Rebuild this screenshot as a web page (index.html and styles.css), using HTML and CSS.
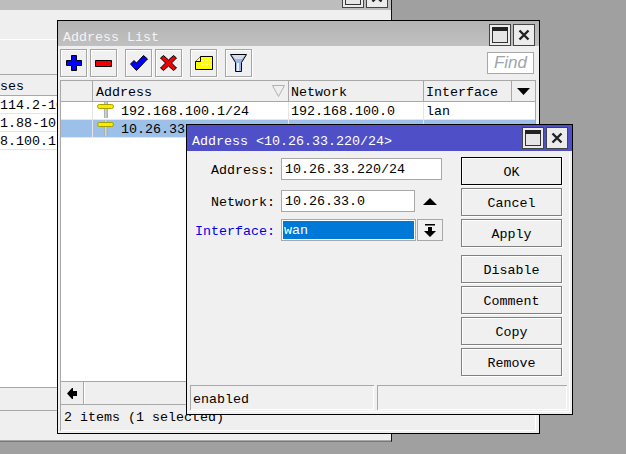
FILE: index.html
```html
<!DOCTYPE html>
<html lang="en">
<head>
<meta charset="utf-8">
<title>Address List</title>
<link rel="stylesheet" href="styles.css">
</head>
<body>
<div class="desktop">

  <section class="win back">
    <div class="back-title">
      <span class="tbtn back-btn"><svg width="20" height="20"><use href="#i-max"/></svg></span>
      <span class="tbtn back-btn"><svg width="20" height="20"><use href="#i-close"/></svg></span>
    </div>
    <div class="back-tools"></div>
    <div class="back-gap"></div>
    <div class="back-head"><span class="back-cell">ses</span></div>
    <div class="back-rows">
      <div class="back-row">114.2-10</div>
      <div class="back-row">1.88-10.</div>
      <div class="back-row">8.100.1-</div>
    </div>
    <div class="back-scroll"></div>
    <div class="back-status"></div>
  </section>

  <section class="win list">
    <header class="title list-title">
      <span class="title-text">Address List</span>
      <span class="tbtn"><svg width="20" height="20"><use href="#i-max"/></svg></span>
      <span class="tbtn"><svg width="20" height="20"><use href="#i-close"/></svg></span>
    </header>
    <div class="toolbar">
      <span class="tool"><svg width="16" height="16" viewBox="0 0 16 16"><path d="M5.500.5h5v5h5v5h-5v5h-5v-5h-5v-5h5z" fill="#0000ff" stroke="#000"/></svg></span>
      <span class="tool"><svg width="17" height="7" viewBox="0 0 17 7"><path d="M.5.500h16v6H.5z" fill="#f00000" stroke="#000"/></svg></span>
      <span class="tool group"><svg width="18" height="16" viewBox="0 0 18 16"><path d="M.5 9l3.500-3.500 2.500 2.500L13.500.5l4 3.500L6.500 15.500z" fill="#0000ff" stroke="#000"/></svg></span>
      <span class="tool"><svg width="17" height="16" viewBox="0 0 17 16"><path d="M.5 3l3-2.500 5 4.500 5-4.500 3 2.500-5 5 5 5-3 2.500-5-4.500-5 4.500-3-2.500 5-5z" fill="#f00000" stroke="#000"/></svg></span>
      <span class="tool group"><svg width="18" height="14" viewBox="0 0 18 14"><path d="M5.500.5h12v13H.5V5.500z" fill="#ffff00" stroke="#000"/><path d="M.5 5.500h5v-5" fill="#fff59a" stroke="#000"/><path d="M6 4.500h10M6 8.500h10" stroke="#fff8a0" stroke-dasharray="3 1"/></svg></span>
      <span class="tool group"><svg width="17" height="18" viewBox="0 0 17 18"><path d="M.5.500h16l-5 8v9h-6v-9z" fill="#9db4e6" stroke="#000"/><path d="M2 1h13l-3 4H5z" fill="#d8dcec"/><path d="M7 9h2v8H7z" fill="#e8eefa"/></svg></span>
      <span class="find">Find</span>
    </div>
    <div class="table">
      <div class="thead">
        <span class="th col-mark"></span>
        <span class="th col-addr">Address<svg class="sort" width="13" height="13" viewBox="0 0 13 13"><path d="M.5 1.500h12l-6 11z" fill="none" stroke="#b0b0b0"/></svg></span>
        <span class="th col-net">Network</span>
        <span class="th col-if">Interface</span>
        <span class="th col-menu"><svg width="13" height="7" viewBox="0 0 13 7"><path d="M0 0h13L6.500 7z"/></svg></span>
      </div>
      <div class="tr">
        <span class="td col-mark"></span>
        <span class="td col-addr"><svg class="pin" width="17" height="17"><use href="#i-addr"/></svg><span class="cell-text">192.168.100.1/24</span></span>
        <span class="td col-net"><span class="cell-text">192.168.100.0</span></span>
        <span class="td col-rest"><span class="cell-text">lan</span></span>
      </div>
      <div class="tr selected">
        <span class="td col-mark"></span>
        <span class="td col-addr"><svg class="pin" width="17" height="17"><use href="#i-addr"/></svg><span class="cell-text">10.26.33.220/24</span></span>
        <span class="td col-net"><span class="cell-text">10.26.33.0</span></span>
        <span class="td col-rest"><span class="cell-text">wan</span></span>
      </div>
      <div class="tbody-fill"></div>
      <div class="hscroll">
        <span class="scroll-btn"><svg width="10" height="11" viewBox="0 0 10 11"><path d="M0 5.500L5 0h1v3h4v5H6v3H5z"/></svg></span>
      </div>
    </div>
    <div class="list-status">2 items (1 selected)</div>
  </section>

  <section class="win dialog">
    <header class="title dialog-title">
      <span class="title-text">Address &lt;10.26.33.220/24&gt;</span>
      <span class="tbtn"><svg width="20" height="20"><use href="#i-max"/></svg></span>
      <span class="tbtn"><svg width="20" height="20"><use href="#i-close"/></svg></span>
    </header>
    <div class="dialog-body">
      <div class="form">
        <div class="field">
          <span class="label">Address:</span>
          <span class="input wide">10.26.33.220/24</span>
        </div>
        <div class="field field-net">
          <span class="label">Network:</span>
          <span class="input">10.26.33.0</span>
          <svg class="up" width="14" height="7" viewBox="0 0 14 7"><path d="M7 0l7 7H0z"/></svg>
        </div>
        <div class="field field-if">
          <span class="label blue">Interface:</span>
          <span class="input select"><span class="picked">wan</span></span>
          <span class="drop"><svg width="12" height="14" viewBox="0 0 12 14"><path d="M1 1h10v1.500H1zM4 4h4v4h4l-6 6-6-6h4z"/></svg></span>
        </div>
      </div>
      <div class="actions">
        <span class="btn default">OK</span>
        <span class="btn">Cancel</span>
        <span class="btn">Apply</span>
        <span class="btn after-gap">Disable</span>
        <span class="btn">Comment</span>
        <span class="btn">Copy</span>
        <span class="btn">Remove</span>
      </div>
    </div>
    <div class="dialog-status">
      <span class="cell first">enabled</span>
      <span class="cell second"></span>
    </div>
  </section>
</div>

<svg class="defs" width="0" height="0">
  <symbol id="i-max" viewBox="0 0 20 20"><rect x="2.500" y="2.500" width="15" height="15" fill="#e6e6e6" stroke="#333"/><rect x="2" y="2" width="16" height="4" fill="#222"/></symbol>
  <symbol id="i-close" viewBox="0 0 20 20"><path d="M5.500 5.500l9 9M14.500 5.500l-9 9" stroke="#222" stroke-width="2.400" fill="none"/></symbol>
  <symbol id="i-addr" viewBox="0 0 17 17"><rect x="7" y="0" width="4" height="16" fill="#a4b4b0"/><rect x="8" y="0" width="1.500" height="16" fill="#d0d8d8"/><rect x=".5" y="2.500" width="16" height="4" rx="2" fill="#f6ee00" stroke="#a89c00"/></symbol>
</svg>
</body>
</html>
```
FILE: styles.css
```css
* { box-sizing: border-box; }
html, body { margin: 0; padding: 0; }
body { width: 626px; height: 454px; overflow: hidden; background: #a0a0a0; }
.defs { position: absolute; }
.desktop {
  position: relative;
  width: 626px;
  height: 454px;
  overflow: hidden;
  font: 13.33px/18px "Liberation Mono", "DejaVu Sans Mono", monospace;
  color: #000;
}
.win { position: absolute; display: flex; flex-direction: column; background: #f0f0f0; border: 1px solid #000; }

/* back window */
.back { left: -20px; top: -20px; width: 412px; height: 462px; border-color: #111; border-bottom-color: #777; background: #efefef; }
.back-title { height: 29px; background: #bdbdbd; display: flex; justify-content: flex-end; align-items: flex-end; gap: 2px; padding: 0 3px 2px 0; flex: none; }
.back-btn { flex: none; }
.back-tools { height: 30px; flex: none; border-bottom: 1px solid #fff; }
.back-gap { height: 35px; flex: none; border-bottom: 1px solid #a8a8a8; }
.back-head { height: 21px; flex: none; padding: 3px 0 0 19px; border-bottom: 1px solid #a8a8a8; }
.back-cell { display: block; }
.back-rows { flex: 1; background: #fff; border-bottom: 1px solid #a8a8a8; }
.back-row { height: 18px; padding: 2px 0 0 19px; border-bottom: 1px solid #e4e4e4; line-height: 16px; white-space: nowrap; }
.back-scroll { height: 23px; flex: none; border-bottom: 1px solid #a8a8a8; }
.back-status { height: 30px; flex: none; border-bottom: 1px solid #a8a8a8; }

/* title bars */
.title { display: flex; align-items: center; gap: 2px; flex: none; height: 25px; padding-right: 4px; color: #f4f4f4; }
.title-text { flex: 1; padding-left: 5px; padding-top: 6px; white-space: nowrap; }
.list-title { background: linear-gradient(#b4b4b4, #c0c0c0); padding-top: 2px; }
.dialog-title { background: #4f50c8; color: #fff; height: 26px; }
.dialog-title .title-text { padding-top: 8px; }
.tbtn { display: flex; width: 22px; height: 22px; background: #ececec; border: 1px solid #444; flex: none; align-items: center; justify-content: center; }
.tbtn svg { flex: none; }

/* list window */
.list { left: 57px; top: 20px; width: 483px; height: 414px; background: #efefef; }
.toolbar { display: flex; align-items: center; height: 34px; flex: none; padding: 0 4px 0 2px; gap: 3px; }
.tool { display: flex; width: 27px; height: 28px; align-items: center; justify-content: center; background: #f0f0f0; border: 1px solid #a4a4a4; box-shadow: inset 1px 1px 0 #fff, 1px 1px 0 #fff; flex: none; }
.tool.group { margin-left: 5px; }
.find { margin-left: auto; margin-right: 1px; width: 47px; height: 22px; background: #fff; border: 1px solid #a8a8a8; color: #a0a4b0; font: italic 17px/20px "Liberation Sans", sans-serif; text-align: center; }
.table { display: flex; flex-direction: column; flex: 1; margin: 0 3px 0 2px; border-left: 1px solid #a8a8a8; border-right: 1px solid #a8a8a8; border-top: 1px solid #a8a8a8; min-height: 0; }
.thead { display: flex; height: 21px; flex: none; border-bottom: 1px solid #a8a8a8; background: #efefef; }
.th { display: block; position: relative; border-right: 1px solid #a8a8a8; padding: 2px 0 0 2px; line-height: 19px; flex: none; }
.th.col-addr { padding-left: 3px; }
.col-mark { width: 32px; }
.col-addr { width: 196px; }
.col-net { width: 135px; }
.col-if { width: 88px; }
.col-menu { flex: 1; border-right: 0; display: flex; align-items: center; justify-content: center; padding: 0; }
.sort { position: absolute; right: 3px; top: 3px; }
.tr { display: flex; height: 18px; flex: none; background: #fff; border-bottom: 1px solid #e6e6e6; }
.td { display: flex; align-items: center; padding-left: 2px; border-right: 1px solid #e6e6e6; flex: none; white-space: nowrap; overflow: hidden; height: 17px; }
.cell-text { display: block; padding-top: 2px; }
.col-rest { flex: 1; border-right: 0; }
.td.col-addr { padding-left: 4px; gap: 7px; }
.pin { flex: none; }
.selected { background: #9cc0e8; }
.tbody-fill { flex: 1; background: #fff; }
.hscroll { display: flex; height: 23px; flex: none; border-top: 1px solid #a8a8a8; background: #efefef; }
.scroll-btn { display: flex; width: 23px; align-items: center; justify-content: center; border-right: 1px solid #a8a8a8; box-shadow: 1px 0 0 #fff; }
.list-status { height: 27px; flex: none; padding: 4px 0 0 3px; border-top: 1px solid #a8a8a8; border-left: 1px solid #a8a8a8; margin: 0 3px 2px 2px; line-height: 18px; white-space: nowrap; box-shadow: inset -1px -1px 0 #fff; }

/* dialog */
.dialog { left: 186px; top: 124px; width: 387px; height: 291px; box-shadow: inset -2px -2px 0 #f0f0f0, inset -3px -3px 0 #fff; }
.dialog-body { flex: 1; display: flex; padding: 7px 10px 0 0; min-height: 0; }
.form { flex: 1; display: flex; flex-direction: column; }
.field { display: flex; align-items: center; height: 22px; gap: 6px; }
.field-net { margin-top: 10px; }
.field-if { margin-top: 7px; }
.label { width: 88px; text-align: right; flex: none; white-space: nowrap; padding-top: 4px; }
.blue { color: #0000e0; }
.input { display: block; width: 134px; height: 22px; background: #fff; border: 1px solid #a8a8a8; padding: 2px 0 0 3px; line-height: 18px; flex: none; }
.wide { width: 161px; }
.up { margin-left: 2px; flex: none; }
.select { width: 135px; padding: 1px; line-height: 18px; }
.picked { display: block; height: 18px; background: #0078d7; color: #fff; padding: 1px 0 0 1px; line-height: 18px; }
.field-if .select { margin-right: -5px; }
.drop { display: flex; width: 26px; height: 22px; align-items: center; justify-content: center; border: 1px solid #a8a8a8; background: #f0f0f0; flex: none; }
.actions { width: 101px; display: flex; flex-direction: column; gap: 3px; flex: none; margin-top: -1px; }
.btn { display: block; height: 28px; border: 1px solid #808080; box-shadow: inset 1px 1px 0 #fff, 1px 1px 0 #fff; text-align: center; padding-top: 1px; line-height: 28px; background: #f0f0f0; }
.btn.default { border-color: #000; }
.after-gap { margin-top: 5px; }
.dialog-status { display: flex; height: 25px; flex: none; margin: 0 5px 4px 3px; gap: 3px; }
.cell { display: block; border-top: 1px solid #a8a8a8; border-left: 1px solid #a8a8a8; padding: 5px 0 0 2px; line-height: 18px; box-shadow: inset -1px -1px 0 #fff; }
.first { width: 184px; flex: none; }
.second { flex: 1; }
```
